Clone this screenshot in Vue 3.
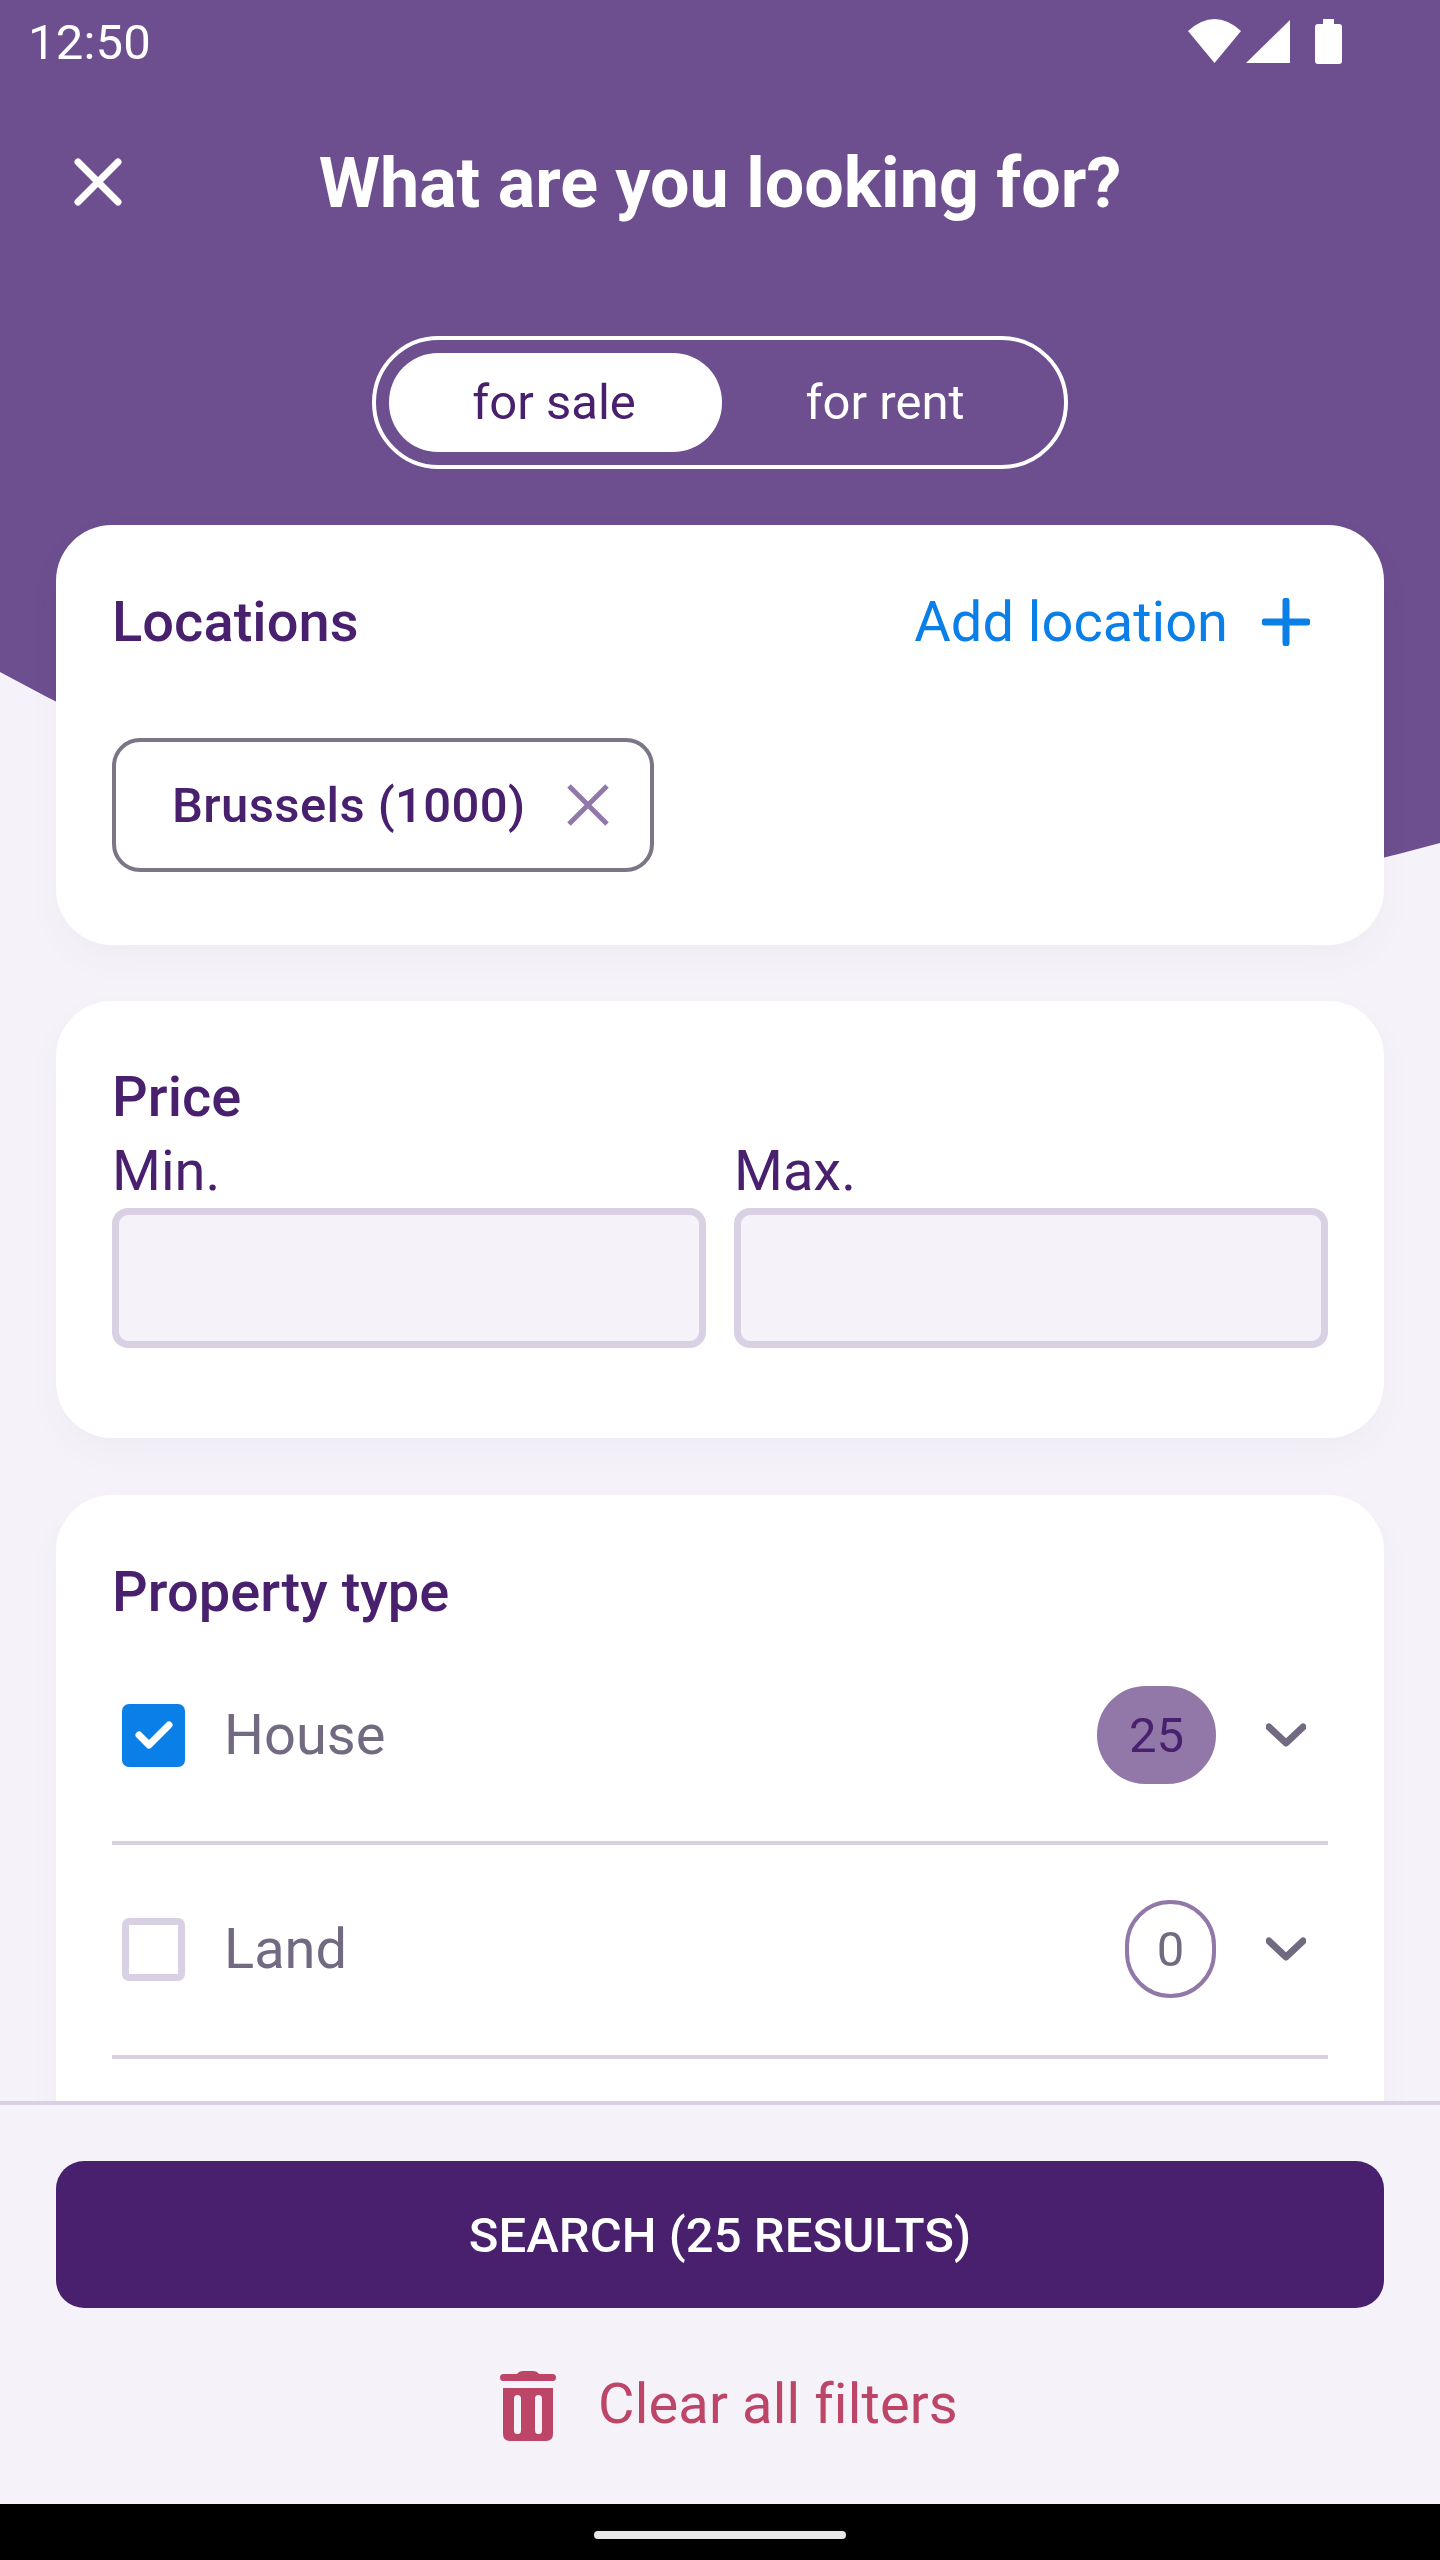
<template>
  <div class="screen">
    <div class="main">
      <!-- purple backdrop with the curved bottom edge -->
      <svg class="backdrop" viewBox="0 0 1440 1000" width="1440" height="1000">
        <path d="M0 0H1440V843Q690 1050 0 672Z" fill="#6d4e8e" />
      </svg>

      <div class="status-bar">
        <span class="time">12:50</span>
        <svg class="status-icons" viewBox="0 0 154 46" width="154" height="46">
          <path d="M0 12Q26.5 -12 53 12L26.5 44Z" fill="#fff" />
          <path d="M58 44L102 1V44Z" fill="#fff" />
          <rect x="127" y="5" width="27" height="40" rx="3" fill="#fff" />
          <rect x="135" y="0" width="11" height="7" fill="#fff" />
        </svg>
      </div>

      <div class="toolbar">
        <svg class="close" viewBox="0 0 48 48" width="48" height="48">
          <path d="M4 4L44 44M44 4L4 44" stroke="#fff" stroke-width="7" stroke-linecap="round" />
        </svg>
        <h1 class="title">What are you looking for?</h1>
      </div>

      <div class="toggle">
        <div class="segment active">for sale</div>
        <div class="segment">for rent</div>
      </div>

      <section class="card card-locations">
        <div class="card-head">
          <h2 class="card-title">Locations</h2>
          <div class="add-location">
            <span>Add location</span>
            <svg viewBox="0 0 48 48" width="48" height="48">
              <path d="M24 3V45M3 24H45" stroke="#0a7fe8" stroke-width="7" stroke-linecap="round" />
            </svg>
          </div>
        </div>
        <div class="chip">
          <span>Brussels (1000)</span>
          <svg viewBox="0 0 42 42" width="42" height="42">
            <path d="M2 2L40 40M40 2L2 40" stroke="#9278a8" stroke-width="5" />
          </svg>
        </div>
      </section>

      <section class="card card-price">
        <h2 class="card-title">Price</h2>
        <div class="price-fields">
          <label v-for="field in priceFields" :key="field" class="price-field">
            <span class="field-label">{{ field }}</span>
            <div class="field-input"></div>
          </label>
        </div>
      </section>

      <section class="card card-type">
        <h2 class="card-title">Property type</h2>
        <div v-for="row in propertyTypes" :key="row.name" class="type-row">
          <div class="checkbox" :class="{ checked: row.count > 0 }">
            <svg v-if="row.count > 0" viewBox="0 0 63 63" width="63" height="63">
              <path d="M17 31L27 41L47 21" fill="none" stroke="#fff" stroke-width="7" stroke-linecap="round" stroke-linejoin="round" />
            </svg>
          </div>
          <span class="type-name">{{ row.name }}</span>
          <span class="count" :class="{ filled: row.count > 0 }">{{ row.count }}</span>
          <svg class="chevron" viewBox="0 0 40 24" width="40" height="24">
            <path d="M3 4L20 20L37 4" fill="none" stroke="#726a80" stroke-width="7" stroke-linecap="round" stroke-linejoin="round" />
          </svg>
        </div>
      </section>
    </div>

    <footer class="footer">
      <button class="search">SEARCH (25 RESULTS)</button>
      <div class="clear">
        <svg viewBox="0 0 56 70" width="56" height="70">
          <path d="M17 3Q19 0 23 0H33Q37 0 39 3H52.5A3.5 3.5 0 0 1 52.5 10H3.5A3.5 3.5 0 0 1 3.5 3Z" fill="#bd4567" />
          <path fill-rule="evenodd" d="M3 17H53V63Q53 70 46 70H10Q3 70 3 63ZM17.5 24A3.5 3.5 0 0 0 14 27.5V59.5A3.5 3.5 0 0 0 21 59.5V27.5A3.5 3.5 0 0 0 17.5 24ZM38.5 24A3.5 3.5 0 0 0 35 27.5V59.5A3.5 3.5 0 0 0 42 59.5V27.5A3.5 3.5 0 0 0 38.5 24Z" fill="#bd4567" />
        </svg>
        <span class="clear-label">Clear all filters</span>
      </div>
    </footer>

    <div class="nav-bar">
      <div class="home-pill"></div>
    </div>
  </div>
</template>

<script setup>
const priceFields = ['Min.', 'Max.']

const propertyTypes = [
  { name: 'House', count: 25 },
  { name: 'Land', count: 0 },
]
</script>

<style>
body {
  margin: 0;
}
</style>

<style scoped>
.screen {
  width: 1440px;
  height: 2560px;
  display: flex;
  flex-direction: column;
  background: #f5f3f9;
  font-family: Roboto, 'Noto Sans', sans-serif;
  overflow: hidden;
}

.main {
  position: relative;
  flex: 1;
  min-height: 0;
  overflow: hidden;
}

.backdrop {
  position: absolute;
  top: 0;
  left: 0;
}

/* Status bar */
.status-bar {
  position: relative;
  height: 84px;
  display: flex;
  justify-content: space-between;
  padding: 0 98px 0 28px;
  color: #fff;
}
.time {
  font-size: 49px;
  line-height: 86px;
  letter-spacing: 0.2px;
}
.status-icons {
  margin-top: 19px;
}

/* Toolbar */
.toolbar {
  position: relative;
  height: 196px;
  box-sizing: border-box;
  padding-top: 2px;
  display: flex;
  align-items: center;
  justify-content: center;
}
.close {
  position: absolute;
  left: 74px;
  top: 74px;
}
.title {
  margin: 0;
  font-size: 70px;
  font-weight: 700;
  color: #fff;
}

/* For sale / for rent */
.toggle {
  position: relative;
  width: 696px;
  height: 133px;
  box-sizing: border-box;
  margin: 56px auto;
  padding: 13px;
  display: flex;
  border: 4px solid #fff;
  border-radius: 67px;
}
.segment {
  flex: 1;
  display: flex;
  align-items: center;
  justify-content: center;
  padding-right: 3px;
  font-size: 49px;
  color: #fff;
  border-radius: 49px;
}
.segment.active {
  flex: 0 0 333px;
  box-sizing: border-box;
  background: #fff;
  color: #48206e;
}

/* Cards */
.card {
  position: relative;
  margin: 0 56px 56px;
  box-sizing: border-box;
  background: #fff;
  border-radius: 56px;
  box-shadow: 0 14px 35px rgba(72, 32, 110, 0.035);
}
.card-title {
  margin: 0;
  font-size: 56px;
  line-height: 66px;
  font-weight: 500;
  letter-spacing: 0.05px;
  color: #48206e;
}

.card-locations {
  height: 420px;
  padding: 56px;
}
.card-head {
  display: flex;
  align-items: center;
  justify-content: space-between;
  height: 82px;
  margin-bottom: 75px;
  padding-right: 18px;
}
.add-location {
  display: flex;
  align-items: center;
  gap: 34px;
  font-size: 56px;
  color: #0a7fe8;
}
.chip {
  display: inline-flex;
  align-items: center;
  gap: 41px;
  box-sizing: border-box;
  width: 542px;
  height: 134px;
  padding-left: 56px;
  border: 4px solid #7c7684;
  border-radius: 28px;
  font-size: 49px;
  font-weight: 500;
  letter-spacing: 0.4px;
  color: #48206e;
}

.card-price {
  height: 437px;
  padding: 63px 56px 0;
}
.price-fields {
  display: flex;
  gap: 28px;
  margin-top: 8px;
}
.price-field {
  flex: 1;
  display: flex;
  flex-direction: column;
  gap: 4px;
}
.field-label {
  font-size: 56px;
  line-height: 66px;
  color: #48206e;
}
.field-input {
  height: 140px;
  box-sizing: border-box;
  border: 7px solid #dad0e3;
  border-radius: 16px;
  background: #f5f3f9;
}

.card-type {
  padding: 64px 56px 240px;
  margin-top: 57px;
  margin-bottom: 0;
}
.card-type .card-title {
  margin-bottom: 6px;
}
.type-row {
  display: flex;
  align-items: center;
  height: 214px;
  box-sizing: border-box;
  padding: 2px 22px 4px 10px;
  border-bottom: 4px solid #dad0e3;
}
.checkbox {
  width: 63px;
  height: 63px;
  box-sizing: border-box;
  border: 7px solid #dad0e3;
  border-radius: 7px;
}
.checkbox.checked {
  border: 0;
  background: #0a7fe8;
}
.type-name {
  flex: 1;
  margin-left: 39px;
  font-size: 56px;
  color: #726a80;
}
.count {
  min-width: 91px;
  height: 98px;
  box-sizing: border-box;
  display: flex;
  align-items: center;
  justify-content: center;
  border: 4px solid #9278a8;
  border-radius: 49px;
  font-size: 49px;
  color: #726a80;
}
.count.filled {
  min-width: 119px;
  background: #9278a8;
  color: #48206e;
}
.chevron {
  margin-left: 50px;
}

/* Footer */
.footer {
  box-sizing: border-box;
  height: 403px;
  padding: 56px 56px 0;
  border-top: 4px solid #dad0e3;
  background: #f5f3f9;
}
.search {
  display: block;
  width: 100%;
  height: 147px;
  padding-top: 3px;
  border: 0;
  border-radius: 28px;
  background: #48206e;
  color: #fff;
  font-family: inherit;
  font-size: 49px;
  font-weight: 500;
  letter-spacing: 0.05px;
}
.clear {
  display: flex;
  align-items: center;
  justify-content: center;
  gap: 42px;
  margin-top: 63px;
  padding-left: 18px;
  font-size: 56px;
  letter-spacing: 0.15px;
  color: #bd4567;
}
.clear-label {
  margin-bottom: 4px;
}

/* Navigation bar */
.nav-bar {
  height: 56px;
  display: flex;
  justify-content: center;
  background: #000;
}
.home-pill {
  width: 252px;
  height: 8px;
  margin-top: 27px;
  border-radius: 4px;
  background: #e8e8e8;
}
</style>
